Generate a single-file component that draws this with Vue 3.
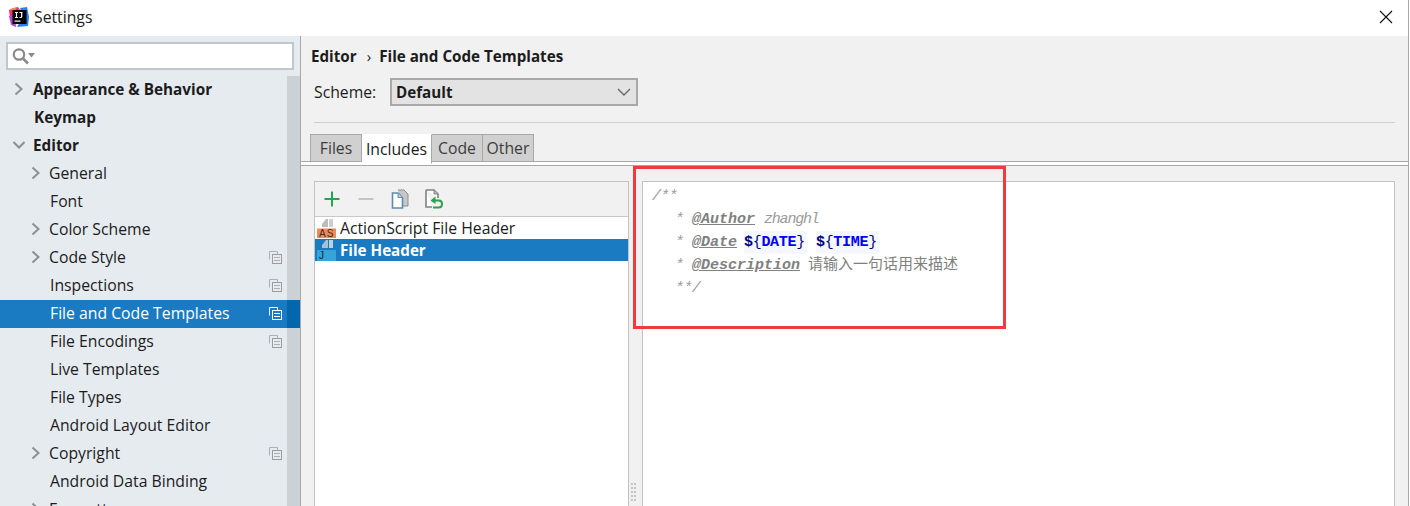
<script setup>
const rows = [
  { t: 'Appearance & Behavior', lvl: 0, arrow: 'r', bold: true },
  { t: 'Keymap', lvl: 0, bold: true },
  { t: 'Editor', lvl: 0, arrow: 'd', bold: true },
  { t: 'General', lvl: 1, arrow: 'r' },
  { t: 'Font', lvl: 1 },
  { t: 'Color Scheme', lvl: 1, arrow: 'r' },
  { t: 'Code Style', lvl: 1, arrow: 'r', copy: true },
  { t: 'Inspections', lvl: 1, copy: true },
  { t: 'File and Code Templates', lvl: 1, copy: true, sel: true },
  { t: 'File Encodings', lvl: 1, copy: true },
  { t: 'Live Templates', lvl: 1 },
  { t: 'File Types', lvl: 1 },
  { t: 'Android Layout Editor', lvl: 1 },
  { t: 'Copyright', lvl: 1, arrow: 'r', copy: true },
  { t: 'Android Data Binding', lvl: 1 },
  { t: 'Formatter', lvl: 1, arrow: 'r' }
]
const tabs = ['Files', 'Includes', 'Code', 'Other']
</script>

<template>
  <div class="window">
    <header class="titlebar">
      <svg class="logo" width="20" height="20" viewBox="0 0 20 20">
        <path d="M0 3 L9 0 L13 6 L5 12 L1 11Z" fill="#f0336a" />
        <path d="M0 9 L6 9 L7 20 L2 18Z" fill="#b04fc0" />
        <path d="M11 1 L18 0 L20 10 L19 19 L8 20 L14 10Z" fill="#2b7de9" />
        <path d="M1 2 L8 0 L6 5Z" fill="#f58a2e" />
        <rect x="3.5" y="3" width="14" height="14" fill="#000" />
        <rect x="5.5" y="13.5" width="6" height="1.2" fill="#fff" />
        <path d="M6 5.5h3M7.5 5.5v5M6 10.5h3M10.5 5.5h3M12.7 5.5v4q0 1-1 1h-1.2" fill="none" stroke="#fff" stroke-width="1.2" />
      </svg>
      <span class="title">Settings</span>
      <svg class="close" width="14" height="14" viewBox="0 0 14 14">
        <path d="M1 1 L13 13 M13 1 L1 13" stroke="#111" stroke-width="1.1" fill="none" />
      </svg>
    </header>

    <div class="body">
      <aside class="sidebar">
        <div class="searchwrap">
          <div class="search">
            <svg width="28" height="18" viewBox="0 0 28 18">
              <circle cx="8" cy="7.5" r="5.2" fill="none" stroke="#8a8a8a" stroke-width="2.2" />
              <path d="M12 11.5 L17 16.5" stroke="#8a8a8a" stroke-width="2.6" />
              <path d="M17 6 H24 L20.5 10.5Z" fill="#8a8a8a" />
            </svg>
          </div>
        </div>
        <div class="tree">
          <div class="scrollbar"></div>
          <div
            v-for="r in rows"
            :key="r.t"
            class="row"
            :class="{ sel: r.sel, bold: r.bold, l1: r.lvl === 1 }"
          >
            <svg v-if="r.arrow" class="arrow" width="12" height="14" viewBox="0 0 12 14">
              <path v-if="r.arrow === 'r'" d="M2.5 1.5 L8.5 7 L2.5 12.5" fill="none" stroke="#8f8f8f" stroke-width="2" />
              <path v-else d="M0.5 4 L6 9.5 L11.5 4" fill="none" stroke="#8f8f8f" stroke-width="2" />
            </svg>
            <span class="lbl" :class="{ witharrow: r.arrow }">{{ r.t }}</span>
            <svg v-if="r.copy" class="copy" width="13" height="13" viewBox="0 0 13 13">
              <path d="M.5 8.5 V.5 H8.5 V3" fill="none" :stroke="r.sel ? '#fff' : '#9fb3c4'" />
              <rect x="3.5" y="3.5" width="9" height="9" :fill="r.sel ? 'none' : '#e6ebf0'" :stroke="r.sel ? '#fff' : '#9d9d9d'" />
              <path d="M5 6.5 H11 M5 9.5 H11" :stroke="r.sel ? '#fff' : '#b0b0b0'" />
            </svg>
          </div>
        </div>
      </aside>

      <main class="main">
        <div class="crumbs"><b>Editor</b><span class="sep">›</span><b>File and Code Templates</b></div>
        <div class="scheme">
          <span class="schemelbl">Scheme:</span>
          <div class="combo">
            <b>Default</b>
            <svg width="14" height="8" viewBox="0 0 14 8">
              <path d="M1 1 L7 7 L13 1" fill="none" stroke="#666" stroke-width="1.4" />
            </svg>
          </div>
        </div>
        <div class="rule"></div>
        <div class="tabs">
          <div v-for="t in tabs" :key="t" class="tab" :class="{ on: t === 'Includes' }">{{ t }}</div>
        </div>
        <div class="tabgap"></div>

        <div class="content">
          <section class="listpanel">
            <div class="toolbar">
              <svg width="18" height="18" viewBox="0 0 18 18">
                <path d="M9 1.5 V16.5 M1.5 9 H16.5" stroke="#2ba24c" stroke-width="2" />
              </svg>
              <svg width="18" height="18" viewBox="0 0 18 18">
                <path d="M1.5 9 H16.5" stroke="#c4c4c4" stroke-width="2" />
              </svg>
              <svg width="20" height="20" viewBox="0 0 20 20">
                <path d="M8 1 H14 L18 5 V17 H13" fill="#c8c8c8" stroke="#8d8d8d" />
                <path d="M2.5 4 H8 L12.5 8.5 V19 H2.5Z" fill="#fff" stroke="#5d8cb0" stroke-width="1.6" />
                <path d="M8 4 V8.5 H12.5" fill="#b9cfe0" stroke="#5d8cb0" />
              </svg>
              <svg width="20" height="20" viewBox="0 0 20 20">
                <path d="M2 1 H10 L14 5 V9 M8 18 H2 V1" fill="#fff" stroke="#808080" stroke-width="1.6" />
                <path d="M10 1 V5 H14" fill="#bbb" stroke="#808080" />
                <path d="M8.5 11.5 H15 Q18 11.5 18 15 Q18 18.5 14.5 18.5 H9" fill="none" stroke="#2ba24c" stroke-width="2" />
                <path d="M11.5 7.5 V15 L6.5 11.5Z" fill="#2ba24c" />
              </svg>
            </div>
            <div class="item">
              <span class="fileicon">
                <svg width="20" height="22" viewBox="0 0 20 22">
                  <path d="M6 7 L10 2 H12 V10 H6Z" fill="#bcbcbc" />
                  <rect x="13" y="2" width="4" height="8" fill="#cfcfcf" />
                  <rect x="1" y="11.5" width="19" height="9.5" fill="#f08a5b" />
                </svg>
                <i class="ext dark">AS</i>
              </span>
              ActionScript File Header
            </div>
            <div class="item active">
              <span class="fileicon">
                <svg width="20" height="22" viewBox="0 0 20 22">
                  <path d="M6 6 L10 1 H12 V9 H6Z" fill="#a9bfd0" />
                  <rect x="13" y="1" width="4" height="8" fill="#bcd0de" />
                  <rect x="1" y="11" width="19" height="11" fill="#35a4d8" />
                </svg>
                <i class="ext">J</i>
              </span>
              <b>File Header</b>
            </div>
          </section>

          <div class="splitter"><div class="grip"></div></div>

          <section class="editor">
            <div class="line"><i class="cm slim">/**</i></div>
            <div class="line in"><i class="cm star">*</i><i class="tag">@Author</i><i class="cm val">zhanghl</i></div>
            <div class="line in"><i class="cm star">*</i><i class="tag">@Date</i><span class="var"><b class="dl">$</b><b class="br">{</b><b>DATE</b><b class="br">}</b></span><span class="var two"><b class="dl">$</b><b class="br">{</b><b>TIME</b><b class="br">}</b></span></div>
            <div class="line in"><i class="cm star">*</i><i class="tag">@Description</i><span class="cn">请输入一句话用来描述</span></div>
            <div class="line in"><i class="cm slim">**/</i></div>
          </section>

          <div class="redbox"></div>
        </div>
      </main>
    </div>
  </div>
</template>

<style>
html, body { margin: 0; background: #fff; overflow: hidden; }
</style>

<style scoped>
.window {
  width: 1408px;
  height: 506px;
  border-right: 1px solid #a8a8a8;
  display: flex;
  flex-direction: column;
  overflow: hidden;
  font-family: "Open Sans", "Noto Sans CJK SC", sans-serif;
  font-size: 15.75px;
  color: #1c1c1c;
  background: #f1f1f1;
}
b { font-size: 15.2px; }
.titlebar {
  height: 36px;
  flex: none;
  background: #fff;
  display: flex;
  align-items: center;
  padding-left: 9px;
}
.logo { flex: none; margin-right: 5px; margin-top: -2px; }
.title { color: #222; margin-top: -2px; }
.close { margin-left: auto; margin-right: 15px; margin-top: -2px; }
.body { flex: 1; display: flex; min-height: 0; }

.sidebar {
  width: 300px;
  flex: none;
  background: #e6ebf0;
  border-right: 1px solid #a8a8a8;
  overflow: hidden;
}
.searchwrap { padding: 6px 6px 6px; }
.search {
  height: 24px;
  background: #fff;
  border: 2px solid #c2c6ca;
  display: flex;
  align-items: center;
  padding-left: 3px;
}
.tree { position: relative; }
.scrollbar {
  position: absolute;
  top: 0;
  bottom: 0;
  right: 0;
  width: 13px;
  background: #ccd1d5;
}
.row {
  position: relative;
  height: 28px;
  display: flex;
  align-items: center;
  padding-left: 34px;
}
.row.l1 { padding-left: 50px; }
.row.bold { font-weight: 700; font-size: 15.3px; }
.row.sel { background: #1a7bc3; color: #fff; }
.row.sel::after {
  content: "";
  position: absolute;
  top: 0;
  bottom: 0;
  right: 0;
  width: 13px;
  background: #0466ad;
}
.arrow { position: absolute; left: 13px; top: 6px; }
.row.l1 .arrow { left: 30px; }
.lbl { white-space: nowrap; margin-top: -3px; }
.lbl.witharrow { margin-left: -1px; }
.copy { position: absolute; left: 269px; top: 7px; z-index: 1; }

.main { flex: 1; min-width: 0; display: flex; flex-direction: column; }
.crumbs {
  margin: 9px 0 0 10px;
  height: 22px;
  line-height: 22px;
  white-space: nowrap;
  margin-bottom: 1px;
}
.sep { display: inline-block; margin: 0 8px 0 10px; font-size: 15px; }
.scheme {
  display: flex;
  align-items: center;
  margin: 10px 0 0 13px;
}
.schemelbl { width: 76px; }
.combo {
  height: 24px;
  border: 2px solid #a9a9a9;
  background: #e3e3e3;
  display: flex;
  align-items: center;
  justify-content: space-between;
  padding: 0 5px 0 4px;
  box-sizing: content-box;
  width: 235px;
}
.rule {
  height: 1px;
  background: #cfcfcf;
  margin: 16px 13px 0 13px;
}
.tabs {
  display: flex;
  margin: 11px 0 0 9px;
  height: 28px;
  position: relative;
}
.tabs::after {
  content: "";
  position: absolute;
  left: -9px;
  right: 0;
  bottom: 0;
  height: 1px;
  background: #a8a8a8;
}
.tab {
  box-sizing: border-box;
  height: 28px;
  width: 51px;
  background: #d0d0d0;
  border: 1px solid #a8a8a8;
  border-left: none;
  color: #3c3c3c;
  display: flex;
  align-items: center;
  justify-content: center;
}
.tab:first-child { border-left: 1px solid #a8a8a8; width: 52px; }
.tab.on {
  background: #fff;
  border-color: #fff;
  color: #1c1c1c;
  width: 70px;
  position: relative;
  z-index: 1;
  height: 30px;
  border-right: 1px solid #a8a8a8;
}
.tabgap {
  height: 3px;
  background: #fff;
  border-bottom: 1px solid #a8a8a8;
}

.content {
  flex: 1;
  position: relative;
  display: flex;
  padding: 15px 13px 0 13px;
  min-height: 0;
}
.listpanel {
  width: 315px;
  flex: none;
  box-sizing: border-box;
  background: #fff;
  border: 1px solid #c2c2c2;
  height: 400px;
}
.toolbar {
  height: 34px;
  background: #f1f1f1;
  border-bottom: 1px solid #c9c9c9;
  display: flex;
  align-items: center;
  padding-left: 8px;
  gap: 16px;
}
.toolbar svg:nth-child(3) { margin-left: -1px; }
.toolbar svg:nth-child(4) { margin-left: -2px; }
.item {
  height: 22px;
  display: flex;
  align-items: center;
  white-space: nowrap;
}
.item.active { background: #1a7bc3; color: #fff; }
.fileicon {
  position: relative;
  display: block;
  width: 20px;
  height: 22px;
  margin: 0 4px 0 1px;
  flex: none;
}
.fileicon svg { display: block; }
.ext {
  position: absolute;
  left: 3px;
  top: 11px;
  font: 400 10px/11px "Liberation Sans", sans-serif;
  color: #123;
}
.ext.dark { color: #4a2a1a; left: 3px; letter-spacing: 1px; }
.splitter { width: 13px; flex: none; position: relative; }
.grip {
  position: absolute;
  left: 2px;
  top: 302px;
  width: 6px;
  height: 18px;
  background-image: radial-gradient(circle at 1px 1px, #c4c4c4 1px, transparent 1.4px);
  background-size: 3px 4px;
}
.editor {
  flex: 1;
  box-sizing: border-box;
  height: 400px;
  background: #fff;
  border: 1px solid #c2c2c2;
  padding: 3px 0 0 9px;
  font-family: "Liberation Mono", "Noto Sans CJK SC", monospace;
  font-size: 15px;
}
.line { height: 23px; line-height: 23px; white-space: nowrap; display: flex; }
.line.in { padding-left: 25px; }
.line b { font-size: 15px; }
.cm { color: #9a9a9a; font-style: italic; }
.slim { letter-spacing: -0.6px; }
.line.in .slim { margin-left: -2px; }
.star { width: 15px; margin-left: -2px; padding-right: 2px; }
.tag {
  color: #808080;
  font-style: italic;
  font-weight: 700;
  text-decoration: underline;
}
.val { margin-left: 9px; letter-spacing: -1.2px; }
.var {
  margin-left: 7px;
  padding-right: 2px;
  background: #f5f9ff;
  color: #0000ff;
  letter-spacing: -0.3px;
}
.var.two { margin-left: 9px; }
.dl { color: #000080; }
.br { color: #000080; font-weight: 400; }
.cn { margin-left: 8px; margin-top: -3px; color: #808080; font-family: "Noto Sans CJK SC", sans-serif; font-size: 15px; }
.redbox {
  position: absolute;
  left: 332px;
  top: 0;
  width: 367px;
  height: 157px;
  border: 3px solid #f03a3c;
  pointer-events: none;
}
</style>
